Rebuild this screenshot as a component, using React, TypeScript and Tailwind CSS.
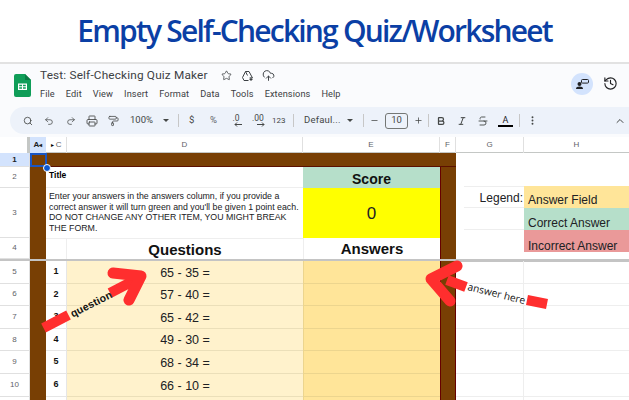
import React from "react";
import { Search, Undo2, Redo2, Printer, PaintRoller, ChevronUp, Star, CloudUpload, History, EllipsisVertical, Minus, Plus, Bold, Italic, Strikethrough } from "lucide-react";

const Arrow = ({ d, head, w }: { d: string; head: string; w: number }) => (
  <svg className="absolute inset-0 w-[629px] h-[400px] pointer-events-none" viewBox="0 0 629 400" fill="none">
    <path d={d} stroke="#ff2e2e" strokeWidth={w} />
    <path d={head} stroke="#ff2e2e" strokeWidth="11" strokeLinecap="round" strokeLinejoin="round" />
  </svg>
);

const rows = [
  ["5", "1", "65 - 35 ="],
  ["6", "2", "57 - 40 ="],
  ["7", "3", "65 - 42 ="],
  ["8", "4", "49 - 30 ="],
  ["9", "5", "68 - 34 ="],
  ["10", "6", "66 - 10 ="],
  ["", "", ""],
];

const cols = "grid grid-cols-[30px_16px_21px_236px_137px_16px_68px_105px]";

function RowNo({ n, h, active }: { n: string; h: string; active?: boolean }) {
  return (
    <div className={`${h} flex items-center justify-center border-b border-r border-[#e0e0e0] text-[8px] ${active ? "bg-[#d3e3fd] text-[#202124] font-bold" : "bg-white text-[#5f6368]"}`}>
      {n}
    </div>
  );
}

const Decimal = ({ t, right }: { t: string; right?: boolean }) => (
  <span className="w-[14px] flex flex-col items-center text-[8.5px] leading-[8px] pb-[1px]">
    {t}
    <svg width="8" height="5" viewBox="0 0 8 5" fill="none" stroke="#444746" strokeWidth="1" className={right ? "ml-[5px]" : "ml-[4px]"}>
      {right ? <path d="M0 2.5H7M5 .5L7 2.5L5 4.5" /> : <path d="M8 2.5H1M3 .5L1 2.5L3 4.5" />}
    </svg>
  </span>
);

export default function App() {
  return (
    <div className="w-[629px] h-[400px] overflow-hidden relative bg-white font-['Liberation_Sans',sans-serif]">
      <div className="h-[62px] flex items-center justify-center font-['Open_Sans',sans-serif] font-semibold text-[#0b3fa5] text-[30px] tracking-[-1.8px] leading-none">
        Empty Self-Checking Quiz/Worksheet
      </div>
      <div className="h-[75px] border-t-2 border-[#e2e2e2] bg-[#fafbfd] flex flex-col">
        <div className="flex h-[43px]">
          <div className="w-[40px] flex items-center justify-center pl-[4px]">
            <svg width="17" height="23" viewBox="0 0 17 23">
              <path d="M2 0H11L17 6V21a2 2 0 0 1-2 2H2a2 2 0 0 1-2-2V2a2 2 0 0 1 2-2Z" fill="#0f9d58" />
              <path d="M11 0L17 6H11Z" fill="#0b7a44" />
              <path d="M4 9.5H13V16H4Z M5.2 10.7V12.2H8V10.7Z M9 10.7V12.2H11.8V10.7Z M5.2 13.3V14.8H8V13.3Z M9 13.3V14.8H11.8V13.3Z" fill="#fff" fillRule="evenodd" />
            </svg>
          </div>
          <div className="flex-1 pt-[3px] text-[#3c4043] font-['Roboto',sans-serif]">
            <div className="flex items-center h-[17px] text-[11.8px] tracking-[0.17px]">
              Test: Self-Checking Quiz Maker
              <Star className="ml-[13px] w-[11px] h-[11px] text-[#3c4043]" strokeWidth={1.7} />
              <svg className="ml-[9px]" width="13" height="12" viewBox="0 0 24 24" fill="none" stroke="#3c4043" strokeWidth="2"><path d="M8 3h7l7 13h-6M8 3L2 15l3 6h9M8 3l4 8" /><path d="M19 15v7M16 19h6" /></svg>
              <CloudUpload className="ml-[8px] w-[13px] h-[13px]" strokeWidth={1.8} />
            </div>
            <div className="flex text-[9.2px] gap-[11px] mt-[3px] tracking-[0.1px]">
              <span>File</span><span>Edit</span><span>View</span><span>Insert</span><span>Format</span><span>Data</span><span>Tools</span><span>Extensions</span><span>Help</span>
            </div>
          </div>
          <div className="flex items-start pt-[9px] pr-[11px] gap-[10px]">
            <div className="w-[22px] h-[22px] rounded-full bg-[#d3e3fd] flex items-center justify-center">
              <svg width="13" height="10" viewBox="0 0 13 10" fill="#202124"><circle cx="3.5" cy="5" r="2" /><path d="M0 10c0-2 1.5-2.6 3.5-2.6S7 8 7 10Z" /><rect x="5.5" y="0.5" width="7" height="3.6" rx="1" fill="none" stroke="#202124" /></svg>
            </div>
            <History className="w-[15px] h-[15px] mt-[3px] text-[#202124]" strokeWidth={1.8} />
          </div>
        </div>
        <div className="ml-[10px] h-[27px] bg-[#edf2fa] rounded-l-full flex items-center text-[#444746] text-[9.5px] font-['Roboto',sans-serif]">
          <Search className="ml-[13px] w-[10px] h-[10px]" strokeWidth={2} />
          <Undo2 className="ml-[11px] w-[10px] h-[10px]" strokeWidth={1.8} />
          <Redo2 className="ml-[12px] w-[10px] h-[10px]" strokeWidth={1.8} />
          <Printer className="ml-[10px] w-[12px] h-[12px]" strokeWidth={1.7} />
          <PaintRoller className="ml-[10px] w-[11px] h-[12px]" strokeWidth={1.7} />
          <span className="ml-[11px] w-[25px]">100%</span>
          <span className="ml-[8px] w-0 h-0 border-x-[3px] border-t-[3px] border-x-transparent border-t-[#444746]" />
          <span className="ml-[9px] w-px h-[13px] bg-[#c7c7c7]" />
          <span className="ml-[10px] w-[8px]">$</span>
          <span className="ml-[13px] w-[10px] text-[#5f6368]">%</span>
          <span className="ml-[9px]"><Decimal t=".0" /></span>
          <span className="ml-[8px]"><Decimal t=".00" right /></span>
          <span className="ml-[7px] w-[16px] text-[8px]">123</span>
          <span className="ml-[5px] w-px h-[13px] bg-[#c7c7c7]" />
          <span className="ml-[10px] w-[36px] tracking-[0.2px]">Defaul...</span>
          <span className="ml-[7px] w-0 h-0 border-x-[3px] border-t-[3px] border-x-transparent border-t-[#444746]" />
          <span className="ml-[10px] w-px h-[13px] bg-[#c7c7c7]" />
          <Minus className="ml-[6px] w-[9px] h-[9px]" strokeWidth={2} />
          <span className="ml-[6px] w-[23px] h-[16px] rounded-[3px] border border-[#747775] flex items-center justify-center">10</span>
          <Plus className="ml-[6px] w-[9px] h-[9px]" strokeWidth={2} />
          <span className="ml-[5px] w-px h-[13px] bg-[#c7c7c7]" />
          <Bold className="ml-[7px] w-[10px] h-[10px]" strokeWidth={3} />
          <Italic className="ml-[11px] w-[10px] h-[10px]" strokeWidth={2.4} />
          <Strikethrough className="ml-[10px] w-[12px] h-[12px]" strokeWidth={1.8} />
          <span className="ml-[9px] w-[15px] flex flex-col items-center text-[#202124] text-[9px] leading-[10px]">A<span className="w-full h-[2px] bg-black" /></span>
          <span className="ml-[6px] w-px h-[13px] bg-[#c7c7c7]" />
          <EllipsisVertical className="ml-[7px] w-[11px] h-[11px]" strokeWidth={2.2} />
          <ChevronUp className="ml-auto mr-[3px] w-[12px] h-[12px]" strokeWidth={2} />
        </div>
      </div>

      {/* column headers */}
      <div className={`${cols} h-[16px] text-[8px] text-[#5f6368] text-center leading-[15px] border-b border-[#c4c7c5]`}>
        <div className="bg-white border-r-[3px] border-[#c4c7c5]" />
        <div className="bg-[#d3e3fd] text-[#202124] font-bold">A<span className="text-[6px]">◂</span></div>
        <div className="border-r border-[#e0e0e0]"><span className="text-[6px] text-black">▸</span> C</div>
        <div className="border-r border-[#e0e0e0]">D</div>
        <div className="border-r border-[#e0e0e0]">E</div>
        <div className="border-r border-[#e0e0e0]">F</div>
        <div className="border-r border-[#e0e0e0]">G</div>
        <div>H</div>
      </div>

      {/* frozen rows */}
      <div className={`${cols} relative`}>
        <div className="col-start-7 col-span-2 row-start-1 row-span-4 pt-[33px]">
          <div className="grid grid-cols-[68px_105px] grid-rows-[22px_22px_22px] text-[12px] text-[#202124] leading-none whitespace-nowrap">
            <div className="ml-[8px] border-y border-[#eeeeee] flex items-end justify-end pb-[3px] pr-[1px]">Legend:</div>
            <div className="bg-[#ffe599] pl-[4px] pb-[2px] flex items-end">Answer Field</div>
            <div className="ml-[8px] border-b border-[#eeeeee]" />
            <div className="bg-[#b6dfca] pl-[4px] pb-[1px] flex items-end">Correct Answer</div>
            <div />
            <div className="bg-[#ea9999] pl-[4px] flex items-end">Incorrect Answer</div>
          </div>
        </div>

        <RowNo n="1" h="h-[14px]" active />
        <div className="col-span-5 h-[14px] bg-[#783f04] border-b border-[#5b0f00]" />

        <RowNo n="2" h="h-[21px]" />
        <div className="bg-[#783f04]" />
        <div className="col-span-2 bg-white text-[8.5px] font-bold text-black pl-[3px] pt-[3px] leading-[10px] border-b border-[#eeeeee]">Title</div>
        <div className="bg-[#b6dfca] flex items-center justify-center text-[14px] leading-none font-bold text-[#111] pt-[2px]">Score</div>
        <div className="bg-[#783f04] border-l border-[#660000]" />

        <RowNo n="3" h="h-[50px]" />
        <div className="bg-[#783f04]" />
        <div className="col-span-2 bg-white text-[8.8px] leading-[10.5px] text-[#202124] pl-[3px] pt-[3px] whitespace-nowrap">
          Enter your answers in the answers column, if you provide a<br />
          correct answer it will turn green and you'll be given 1 point each.<br />
          DO NOT CHANGE ANY OTHER ITEM, YOU MIGHT BREAK<br />
          THE FORM.
        </div>
        <div className="bg-[#ffff00] flex items-center justify-center text-[17px] leading-none text-[#202124]">0</div>
        <div className="bg-[#783f04] border-l border-[#660000]" />

        <RowNo n="4" h="h-[21px]" />
        <div className="bg-[#783f04]" />
        <div className="bg-white border-t border-r border-[#eeeeee]" />
        <div className="bg-white border-t border-[#eeeeee] flex items-center justify-center text-[15px] leading-none font-bold text-[#111]">Questions</div>
        <div className="bg-white border-l border-[#eeeeee] flex items-center justify-center text-[15px] leading-none font-bold text-[#111]">Answers</div>
        <div className="bg-[#783f04] border-l border-[#660000]" />

        {/* selected cell A1 */}
        <div className="absolute left-[30px] top-0 w-[17px] h-[14px] border-2 border-[#1a56c4] pointer-events-none" />
        <div className="absolute left-[43px] top-[11px] w-[6px] h-[6px] rounded-full bg-[#0b57d0] border border-white box-content pointer-events-none" />
      </div>

      {/* freeze divider */}
      <div className="h-[3px] bg-[#c4c4c4]" />

      {/* body rows */}
      <div className={`${cols} -mt-px`}>
        {rows.map((r, i) => (
          <React.Fragment key={i}>
            <div className="h-[22.6px] flex items-center justify-center bg-white border-b border-r border-[#e0e0e0] text-[8px] text-[#5f6368]">{r[0]}</div>
            <div className="bg-[#783f04]" />
            <div className="bg-white border-b border-r border-[#e6e6e6] flex items-center justify-center text-[9px] font-bold text-[#111]">{r[1]}</div>
            <div className="bg-[#fff2cc] border-b border-[#ebdfb9] flex items-center justify-center text-[12.5px] leading-none pt-[2px] text-[#202124]">{r[2]}</div>
            <div className="bg-[#ffe599] border-b border-l border-[#ecd58e]" />
            <div className="bg-[#783f04] border-x border-[#660000]" />
            <div className="border-b border-r border-[#eeeeee]" />
            <div className="border-b border-[#eeeeee]" />
          </React.Fragment>
        ))}
      </div>

      {/* annotations */}
      <Arrow w={10} d="M43.5 328L68.5 315M110 293L135 280" head="M113 273L141 276L129 300" />
      <Arrow w={10} d="M447 280L466 287M527 300L547 304" head="M457 266L431 279L450 301" />
      <span className="absolute left-[71px] top-[309px] text-[10.5px] font-bold text-[#111] -rotate-[27deg] origin-left tracking-[0.2px] leading-none whitespace-nowrap">question</span>
      <span className="absolute left-[468px] top-[281px] text-[10.2px] text-[#111] rotate-[14deg] origin-left font-['Open_Sans',sans-serif] leading-none whitespace-nowrap">answer here</span>
    </div>
  );
}
